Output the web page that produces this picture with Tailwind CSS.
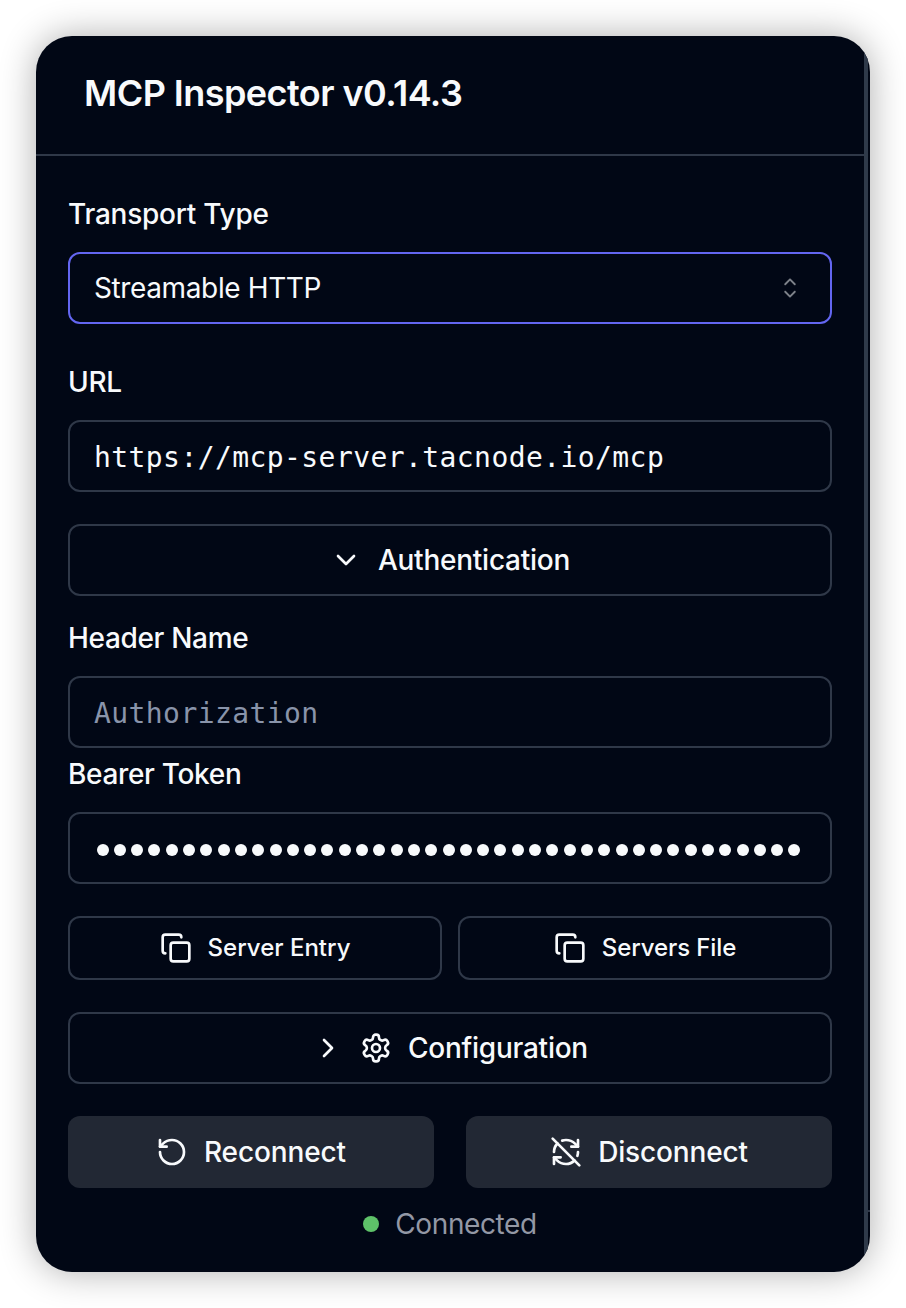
<!DOCTYPE html>
<html lang="en">
  <head>
    <meta charset="UTF-8" />
    <meta name="viewport" content="width=device-width, initial-scale=1.0" />
    <title>MCP Inspector</title>
    <script src="https://cdn.jsdelivr.net/npm/@tailwindcss/browser@4"></script>
    <style>
      body {
        font-family: Inter, sans-serif;
      }
    </style>
  </head>
  <body class="bg-white p-9 h-[1308px] overflow-hidden">
    <div class="flex w-[834px] h-[1236px] rounded-[36px] overflow-hidden bg-[#010715] text-[#f8fafc] text-[28px] shadow-[0_0_36px_rgba(0,0,0,0.32)]">
      <!-- Sidebar -->
      <aside class="flex flex-col w-[832px] shrink-0 border-r-4 border-[#2f3a4a]">
        <header class="flex items-center h-[120px] pl-12 pb-1 border-b-2 border-[#2f3848]">
          <h1 class="text-[36px] font-semibold tracking-[-0.55px] whitespace-nowrap">MCP Inspector v0.14.3</h1>
        </header>

        <div class="flex flex-col px-8 pt-10 tracking-[-0.25px]">
          <label class="h-9 leading-9 font-medium">Transport Type</label>
          <div class="mt-5 flex items-center justify-between h-[72px] px-6 rounded-xl border-2 border-[#6366f1]">
            <span class="tracking-[-0.38px]">Streamable HTTP</span>
            <svg class="size-8 opacity-50" viewBox="0 0 15 15" fill="currentColor">
              <path fill-rule="evenodd" clip-rule="evenodd" d="M4.93179 5.43179C4.75605 5.60753 4.75605 5.89245 4.93179 6.06819C5.10753 6.24392 5.39245 6.24392 5.56819 6.06819L7.49999 4.13638L9.43179 6.06819C9.60753 6.24392 9.89245 6.24392 10.0682 6.06819C10.2439 5.89245 10.2439 5.60753 10.0682 5.43179L7.81819 3.18179C7.73379 3.0974 7.61933 3.04999 7.49999 3.04999C7.38064 3.04999 7.26618 3.0974 7.18179 3.18179L4.93179 5.43179ZM10.0682 9.56819C10.2439 9.39245 10.2439 9.10753 10.0682 8.93179C9.89245 8.75606 9.60753 8.75606 9.43179 8.93179L7.49999 10.8636L5.56819 8.93179C5.39245 8.75606 5.10753 8.75606 4.93179 8.93179C4.75605 9.10753 4.75605 9.39245 4.93179 9.56819L7.18179 11.8182C7.35753 11.9939 7.64245 11.9939 7.81819 11.8182L10.0682 9.56819Z" />
            </svg>
          </div>

          <label class="mt-10 h-9 leading-9 font-medium">URL</label>
          <div class="mt-5 flex items-center h-[72px] px-6 pt-[3px] rounded-xl border-2 border-[#2f3848] font-['DejaVu_Sans_Mono',monospace] tracking-[0.42px]">
            https://mcp-server.tacnode.io/mcp
          </div>

          <button class="mt-8 flex items-center justify-center gap-4 h-[72px] rounded-xl border-2 border-[#2f3848] font-medium">
            <svg class="size-8" viewBox="0 0 24 24" fill="none" stroke="currentColor" stroke-width="2" stroke-linecap="round" stroke-linejoin="round"><path d="m6 9 6 6 6-6" /></svg>
            <span>Authentication</span>
          </button>

          <label class="mt-6 h-9 leading-9 font-medium tracking-[-0.33px]">Header Name</label>
          <div class="mt-5 flex items-center h-[72px] px-6 pt-[3px] rounded-xl border-2 border-[#2f3848] text-[#8994aa] font-['DejaVu_Sans_Mono',monospace] tracking-[0.42px]">
            Authorization
          </div>

          <label class="mt-2 h-9 leading-9 font-medium tracking-[-0.33px]">Bearer Token</label>
          <div id="token" class="mt-5 flex items-center gap-[5.3px] h-[72px] pl-[26.6px] pt-1 rounded-xl border-2 border-[#2f3848]"></div>

          <div class="mt-8 grid grid-cols-2 gap-4 text-[24px] font-medium tracking-normal">
            <button class="flex items-center justify-center gap-4 h-16 rounded-xl border-2 border-[#2f3848]">
              <svg class="size-8" viewBox="0 0 24 24" fill="none" stroke="currentColor" stroke-width="2" stroke-linecap="round" stroke-linejoin="round"><rect width="14" height="14" x="8" y="8" rx="2" ry="2" /><path d="M4 16c-1.1 0-2-.9-2-2V4c0-1.1.9-2 2-2h10c1.1 0 2 .9 2 2" /></svg>
              <span>Server Entry</span>
            </button>
            <button class="flex items-center justify-center gap-4 h-16 rounded-xl border-2 border-[#2f3848]">
              <svg class="size-8" viewBox="0 0 24 24" fill="none" stroke="currentColor" stroke-width="2" stroke-linecap="round" stroke-linejoin="round"><rect width="14" height="14" x="8" y="8" rx="2" ry="2" /><path d="M4 16c-1.1 0-2-.9-2-2V4c0-1.1.9-2 2-2h10c1.1 0 2 .9 2 2" /></svg>
              <span class="tracking-[-0.1px]">Servers File</span>
            </button>
          </div>

          <button class="mt-8 flex items-center justify-center gap-4 h-[72px] rounded-xl border-2 border-[#2f3848] font-medium">
            <svg class="size-8" viewBox="0 0 24 24" fill="none" stroke="currentColor" stroke-width="2" stroke-linecap="round" stroke-linejoin="round"><path d="m9 18 6-6-6-6" /></svg>
            <svg class="size-8" viewBox="0 0 24 24" fill="none" stroke="currentColor" stroke-width="2" stroke-linecap="round" stroke-linejoin="round"><path d="M12.22 2h-.44a2 2 0 0 0-2 2v.18a2 2 0 0 1-1 1.73l-.43.25a2 2 0 0 1-2 0l-.15-.08a2 2 0 0 0-2.73.73l-.22.38a2 2 0 0 0 .73 2.73l.15.1a2 2 0 0 1 1 1.72v.51a2 2 0 0 1-1 1.74l-.15.09a2 2 0 0 0-.73 2.73l.22.38a2 2 0 0 0 2.73.73l.15-.08a2 2 0 0 1 2 0l.43.25a2 2 0 0 1 1 1.73V20a2 2 0 0 0 2 2h.44a2 2 0 0 0 2-2v-.18a2 2 0 0 1 1-1.73l.43-.25a2 2 0 0 1 2 0l.15.08a2 2 0 0 0 2.73-.73l.22-.39a2 2 0 0 0-.73-2.73l-.15-.08a2 2 0 0 1-1-1.74v-.5a2 2 0 0 1 1-1.74l.15-.09a2 2 0 0 0 .73-2.73l-.22-.38a2 2 0 0 0-2.73-.73l-.15.08a2 2 0 0 1-2 0l-.43-.25a2 2 0 0 1-1-1.73V4a2 2 0 0 0-2-2z" /><circle cx="12" cy="12" r="3" /></svg>
            <span>Configuration</span>
          </button>

          <div class="mt-8 grid grid-cols-2 gap-8 font-medium">
            <button class="flex items-center justify-center gap-4 h-[72px] rounded-xl bg-[#222834]">
              <svg class="size-8" viewBox="0 0 24 24" fill="none" stroke="currentColor" stroke-width="2" stroke-linecap="round" stroke-linejoin="round"><path d="M3 12a9 9 0 1 0 9-9 9.75 9.75 0 0 0-6.74 2.74L3 8" /><path d="M3 3v5h5" /></svg>
              <span class="tracking-[-0.12px]">Reconnect</span>
            </button>
            <button class="flex items-center justify-center gap-4 h-[72px] rounded-xl bg-[#222834]">
              <svg class="size-8" viewBox="0 0 24 24" fill="none" stroke="currentColor" stroke-width="2" stroke-linecap="round" stroke-linejoin="round"><path d="M21 8L18.74 5.74A9.75 9.75 0 0 0 12 3C11 3 10.03 3.16 9.13 3.47" /><path d="M8 16H3v5" /><path d="M3 12C3 9.51 4 7.26 5.64 5.64" /><path d="m3 16 2.26 2.26A9.75 9.75 0 0 0 12 21c2.49 0 4.74-1 6.36-2.64" /><path d="M21 12c0 1-.16 1.97-.47 2.87" /><path d="M21 3v5h-5" /><path d="M22 22 2 2" /></svg>
              <span class="tracking-[-0.15px]">Disconnect</span>
            </button>
          </div>

          <div class="mt-4 flex items-center justify-center gap-4 h-10 text-[#9398a5] tracking-[-0.4px]">
            <i class="size-4 rounded-full bg-[#5ec269]"></i>
            <span>Connected</span>
          </div>
        </div>
      </aside>

      <!-- Edge of the main pane, with the top border of the history panel -->
      <div class="w-0.5 pt-[1174px]">
        <div class="h-0.5 bg-[#2f3848]"></div>
      </div>
    </div>

    <script>
      // Masked bearer token
      const token = document.getElementById("token");
      for (let i = 0; i < 41; i++) {
        const dot = document.createElement("i");
        dot.className = "size-3 shrink-0 rounded-full bg-[#f8fafc]";
        token.appendChild(dot);
      }
    </script>
  </body>
</html>
